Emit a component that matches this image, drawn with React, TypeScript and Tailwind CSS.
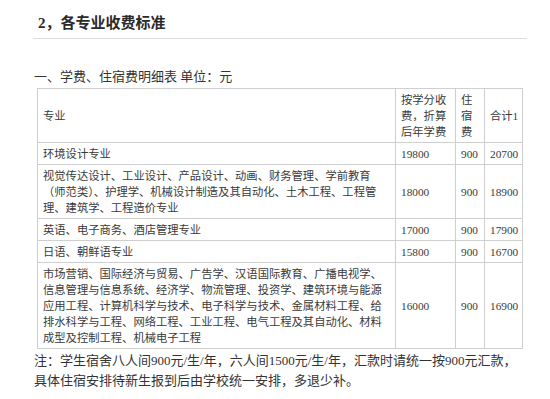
import React from 'react';

const rows = [
  { major: '环境设计专业', fee: '19800', dorm: '900', total: '20700' },
  {
    major:
      '视觉传达设计、工业设计、产品设计、动画、财务管理、学前教育（师范类）、护理学、机械设计制造及其自动化、土木工程、工程管理、建筑学、工程造价专业',
    fee: '18000',
    dorm: '900',
    total: '18900',
  },
  { major: '英语、电子商务、酒店管理专业', fee: '17000', dorm: '900', total: '17900' },
  { major: '日语、朝鲜语专业', fee: '15800', dorm: '900', total: '16700' },
  {
    major:
      '市场营销、国际经济与贸易、广告学、汉语国际教育、广播电视学、信息管理与信息系统、经济学、物流管理、投资学、建筑环境与能源应用工程、计算机科学与技术、电子科学与技术、金属材料工程、给排水科学与工程、网络工程、工业工程、电气工程及其自动化、材料成型及控制工程、机械电子工程',
    fee: '16000',
    dorm: '900',
    total: '16900',
  },
];

const cell = 'border border-[#cfcfcf] px-[5px] py-[2.5px] align-middle';

export default function App() {
  return (
    <div className="w-[550px] h-[399px] bg-white pl-[33px] font-['Liberation_Serif','Noto_Sans_CJK_SC',serif] text-[#333]">
      <div className="w-[494px]">
        <h2 className="pl-[5px] pt-[13px] pb-[5px] border-b border-[#dedede] text-[15px] font-bold leading-[20px] text-[#2a2a2a]">
          2，各专业收费标准
        </h2>
        <p className="mt-[29px] mb-[2px] pl-[1px] text-[13px] leading-[18px] whitespace-nowrap">
          一、学费、住宿费明细表 单位：元
        </p>
        <table className="ml-[4px] w-[485px] table-fixed border-collapse text-[11.3px] leading-[16px] text-[#3a3a3a]">
          <colgroup>
            <col className="w-[358px]" />
            <col className="w-[60px]" />
            <col className="w-[29px]" />
            <col className="w-[38px]" />
          </colgroup>
          <tbody>
            <tr>
              <td className={cell}>专业</td>
              <td className={cell}>按学分收费，折算后年学费</td>
              <td className={cell}>住宿费</td>
              <td className={`${cell} whitespace-nowrap`}>合计1</td>
            </tr>
            {rows.map((r) => (
              <tr key={r.total}>
                <td className={cell}>{r.major}</td>
                <td className={cell}>{r.fee}</td>
                <td className={cell}>{r.dorm}</td>
                <td className={`${cell} whitespace-nowrap`}>{r.total}</td>
              </tr>
            ))}
          </tbody>
        </table>
      </div>
      <div className="mt-[2px] pl-[1px] text-[13px] leading-[20px]">
        <div className="whitespace-nowrap">注：学生宿舍八人间900元/生/年，六人间1500元/生/年，汇款时请统一按900元汇款，</div>
        <div className="whitespace-nowrap">具体住宿安排待新生报到后由学校统一安排，多退少补。</div>
      </div>
    </div>
  );
}
